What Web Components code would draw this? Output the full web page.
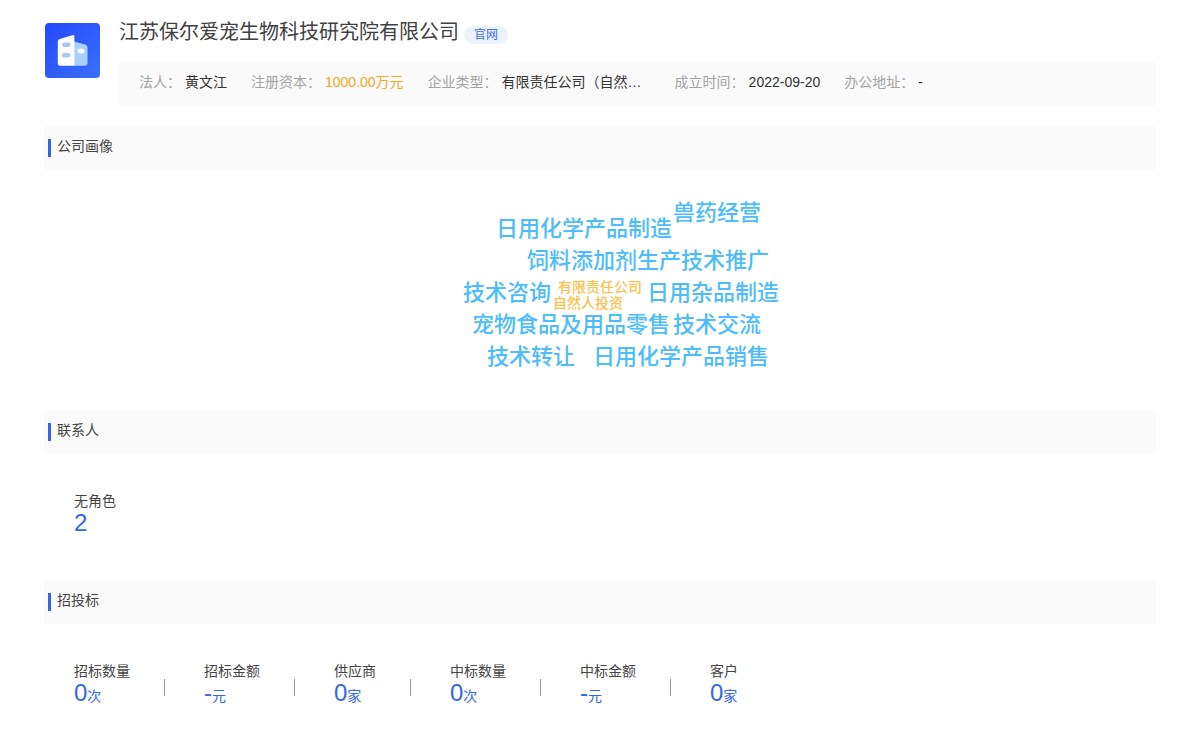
<!DOCTYPE html>
<html lang="zh-CN">
<head>
<meta charset="utf-8">
<title>江苏保尔爱宠生物科技研究院有限公司</title>
<style>
  body { margin: 0; background: #fff; color: #444; font: 14px/20px "Liberation Sans", "Noto Sans CJK SC", sans-serif; }
</style>
</head>
<body>
<company-page></company-page>
<script>
const define = (name, html, setup) => customElements.define(name, class extends HTMLElement {
  connectedCallback() {
    if (this.shadowRoot) return;
    const t = document.createElement('template');
    t.innerHTML = html;
    this.attachShadow({ mode: 'open' }).append(t.content.cloneNode(true));
    if (setup) setup(this, this.shadowRoot);
  }
});

define('company-logo', `
  <style>:host { display: block; width: 55px; height: 55px; } svg { display: block; }</style>
  <svg width="55" height="55" viewBox="0 0 55 55" aria-hidden="true">
    <defs><linearGradient id="g" x1="0" y1="0" x2="1" y2="1">
      <stop offset="0" stop-color="#2348fc"/><stop offset="1" stop-color="#3a70fd"/>
    </linearGradient></defs>
    <rect width="55" height="55" rx="4" fill="url(#g)"/>
    <path d="M29 18.5 40 21.6Q42.5 22.3 42.5 24.5V40Q42.5 42.7 40 42.7H29Z" fill="#a9d0fb"/>
    <path d="M14.8 16 27.5 12.2Q29.4 11.8 29.4 13.5V42.7H15.3Q12.8 42.7 12.8 40V18.5Q12.8 16.6 14.8 16Z" fill="#fff"/>
    <rect x="17" y="19.5" width="8.4" height="4.4" rx="2.2" fill="#a4c8f5"/>
    <rect x="17" y="30" width="8.4" height="4.4" rx="2.2" fill="#a4c8f5"/>
    <rect x="32.5" y="25.8" width="7" height="4.4" rx="2.2" fill="#fff"/>
  </svg>`);

define('info-item', `
  <style>
    :host { display: flex; gap: 4px; white-space: nowrap; }
    .label { color: #a3a3a3; flex: none; }
    .value { color: #333; }
    :host([accent]) .value { color: #f5a623; }
    :host([clip]) .value { width: 149px; }
    :host([clip]) .text { display: block; overflow: hidden; text-overflow: ellipsis; }
  </style>
  <span class="label"></span><span class="value"><span class="text"><slot></slot></span></span>`,
  (el, root) => { root.querySelector('.label').textContent = el.getAttribute('label') + '：'; });

define('company-header', `
  <style>
    :host { display: flex; gap: 19px; padding-left: 1px; }
    company-logo { flex: none; margin-top: 3px; }
    .main { flex: 1; min-width: 0; }
    .top { display: flex; align-items: flex-end; gap: 5px; height: 24px; }
    h1 { margin: 0; font-size: 20px; line-height: 24px; font-weight: 400; color: #404040; }
    a { padding: 0 10px; border-radius: 9px; background: #edf3fe; color: #3b6cf0; font-size: 12px; line-height: 18px; text-decoration: none; }
    .info { display: flex; flex-wrap: wrap; column-gap: 24px; margin-top: 18px; padding: 10px 20px 14px; background: #fafafa; }
  </style>
  <company-logo></company-logo>
  <div class="main">
    <div class="top"><h1>江苏保尔爱宠生物科技研究院有限公司</h1><a href="#">官网</a></div>
    <div class="info">
      <info-item label="法人">黄文江</info-item>
      <info-item label="注册资本" accent>1000.00万元</info-item>
      <info-item label="企业类型" clip>有限责任公司（自然…</info-item>
      <info-item label="成立时间">2022-09-20</info-item>
      <info-item label="办公地址">-</info-item>
    </div>
  </div>`);

define('page-section', `
  <style>
    :host { display: block; }
    header { display: flex; align-items: center; height: 44px; padding-left: 4px; background: #fafafa; }
    i { width: 3px; height: 18px; background: #3366e6; }
    h2 { margin: 0 0 4px 6px; font-size: 14px; line-height: 20px; font-weight: 400; color: #444; }
  </style>
  <header><i></i><h2></h2></header>
  <slot></slot>`,
  (el, root) => { root.querySelector('h2').textContent = el.getAttribute('heading'); });

/* Words are placed on a 400x240 canvas centred in the section. */
define('word-cloud', `
  <style>
    :host { display: block; position: relative; width: 400px; height: 240px; margin: 0 auto; }
    span { position: absolute; white-space: nowrap; font-size: 22px; line-height: 32px; font-weight: 500; color: #4dbcfb; }
    .s { font-size: 14px; line-height: 16px; color: #fcc04c; }
  </style>`,
  (el, root) => {
    [['兽药经营', 273, 27], ['日用化学产品制造', 96, 43], ['饲料添加剂生产技术推广', 127, 75],
     ['技术咨询', 63, 107], ['日用杂品制造', 247, 107], ['宠物食品及用品零售', 72, 139], ['技术交流', 273, 139],
     ['技术转让', 87, 171], ['日用化学产品销售', 193, 171],
     ['有限责任公司', 158, 109, 's'], ['自然人投资', 153, 125, 's']].forEach(([t, x, y, c]) => {
      const s = document.createElement('span');
      s.textContent = t; s.style.left = x + 'px'; s.style.top = y + 'px';
      if (c) s.className = c;
      root.append(s);
    });
  });

define('stat-item', `
  <style>
    :host { display: flex; align-items: center; }
    :host(:not(:last-child))::after { content: ""; width: 1px; height: 17px; margin: 8px 39px 0 34px; background: #999; }
    .label { line-height: 20px; color: #444; }
    .value { height: 24px; line-height: 24px; color: #3366e6; white-space: nowrap; }
    b { font-size: 24px; font-weight: 400; }
  </style>
  <div><div class="label"></div><div class="value"><b><slot></slot></b><span class="unit"></span></div></div>`,
  (el, root) => {
    root.querySelector('.label').textContent = el.getAttribute('label');
    root.querySelector('.unit').textContent = el.getAttribute('unit') || '';
  });

define('stat-row', `
  <style>:host { display: flex; flex-wrap: wrap; padding: 37px 30px 45px; }</style>
  <slot></slot>`);

define('company-page', `
  <style>
    :host { display: block; padding: 20px 44px 0; }
    page-section:first-of-type { margin-top: 20px; }
  </style>
  <company-header></company-header>
  <page-section heading="公司画像"><word-cloud></word-cloud></page-section>
  <page-section heading="联系人"><stat-row><stat-item label="无角色">2</stat-item></stat-row></page-section>
  <page-section heading="招投标">
    <stat-row>
      <stat-item label="招标数量" unit="次">0</stat-item>
      <stat-item label="招标金额" unit="元">-</stat-item>
      <stat-item label="供应商" unit="家">0</stat-item>
      <stat-item label="中标数量" unit="次">0</stat-item>
      <stat-item label="中标金额" unit="元">-</stat-item>
      <stat-item label="客户" unit="家">0</stat-item>
    </stat-row>
  </page-section>`);
</script>
</body>
</html>
